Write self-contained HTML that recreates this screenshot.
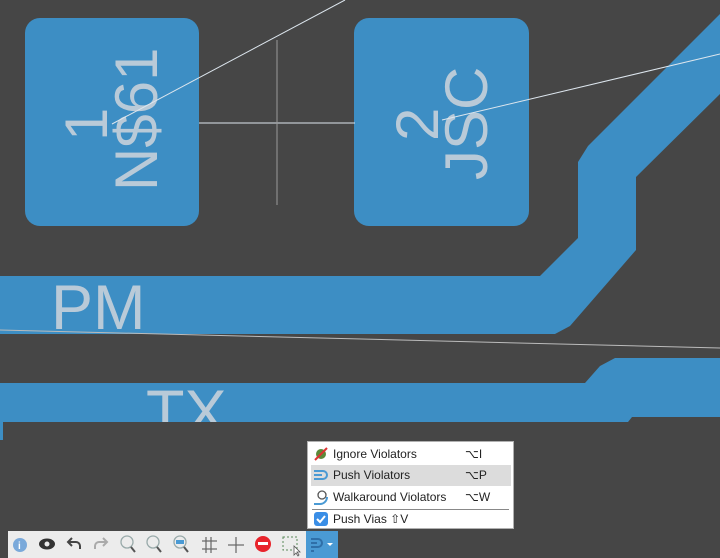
<!DOCTYPE html>
<html><head><meta charset="utf-8"><style>
body{margin:0;width:720px;height:558px;overflow:hidden;background:#464646;font-family:"Liberation Sans",sans-serif;position:relative}
svg{position:absolute;left:0;top:0}
.menu{position:absolute;left:307px;top:441px;width:207px;height:88px;background:#fff;border:1px solid #b0b0b0;box-sizing:border-box;font-size:12px;color:#222}
.it{position:absolute;left:3px;width:200px;height:21px;line-height:21px}
.it .t{position:absolute;left:22px}
.it .k{position:absolute;left:154px}
.it svg{left:2px;top:2px}
.tb{position:absolute;left:8px;top:531px;width:298px;height:27px;background:#ececec}
.bb{position:absolute;left:306px;top:531px;width:32px;height:27px;background:#4a9ad4}
</style></head><body>
<svg width="720" height="558">
<rect x="25" y="18" width="174" height="208" rx="15" fill="#3d8ec4"/>
<rect x="354" y="18" width="175" height="208" rx="15" fill="#3d8ec4"/>
<polygon points="0,276 540,276 578,238 578,162 588,146 720,14 720,94 636,177 636,250 570,326 555,334 0,334" fill="#3d8ec4"/>
<polygon points="0,383 585,383 600,366 615,358 720,358 720,417 632,417 628,422 4,422 4,440 0,440" fill="#3d8ec4"/>
<g fill="#b9cad8" font-family="Liberation Sans" font-size="60">
<text transform="translate(157,191) rotate(-90)">N$61</text>
<text transform="translate(107,141) rotate(-90)">1</text>
<text transform="translate(487,180) rotate(-90)">JSC</text>
<text transform="translate(438,141) rotate(-90)">2</text>
<text x="51" y="329" font-size="63">PM</text>
<text x="146" y="434" font-size="63">TX</text>
</g>
<rect x="0" y="422" width="720" height="20" fill="#464646"/>
<rect x="0" y="422" width="3" height="18" fill="#3d8ec4"/>
<g stroke="#dde6ee" stroke-width="1" fill="none">
<line x1="112" y1="124" x2="345" y2="0"/>
<line x1="199" y1="123" x2="355" y2="123"/>
<line x1="277" y1="40" x2="277" y2="205" stroke="#9a9a9a"/>
<line x1="442" y1="120" x2="720" y2="54"/>
<line x1="0" y1="330" x2="720" y2="348" stroke="#bbb"/>
</g>
</svg>
<div class="menu">
<div class="it" style="top:2px"><svg width="16" height="16"><circle cx="8" cy="8" r="5" fill="#5c8a3a"/><line x1="2" y1="14" x2="14" y2="2" stroke="#d33" stroke-width="2"/></svg><span class="t">Ignore Violators</span><span class="k">⌥I</span></div>
<div class="it" style="top:23px;background:#dcdcdc"><svg width="16" height="16"><path d="M1 4H10a4 4 0 0 1 0 8H1M1 8H9" stroke="#4a9ad4" stroke-width="2" fill="none"/></svg><span class="t">Push Violators</span><span class="k">⌥P</span></div>
<div class="it" style="top:45px"><svg width="16" height="16"><circle cx="9" cy="6" r="4" stroke="#555" stroke-width="1.3" fill="none"/><path d="M1 15H7a7 7 0 0 0 7-7" stroke="#4a9ad4" stroke-width="2" fill="none"/></svg><span class="t">Walkaround Violators</span><span class="k">⌥W</span></div>
<div style="position:absolute;left:4px;right:4px;top:67px;border-top:1px solid #888"></div>
<div class="it" style="top:67px"><svg width="16" height="16"><rect x="1" y="1" width="14" height="14" rx="3" fill="#3a8ee6"/><path d="M4 8l3 3 5-6" stroke="#fff" stroke-width="2" fill="none"/></svg><span class="t">Push Vias ⇧V</span></div>
</div>
<div class="tb"></div><div class="bb"></div>
<svg width="720" height="558" style="pointer-events:none">
<circle cx="20" cy="545" r="7" fill="#7aa9da"/><text x="18" y="549" font-size="10" fill="#fff" font-weight="bold">i</text>
<ellipse cx="47" cy="544" rx="8" ry="5.5" fill="#333"/><circle cx="47" cy="544" r="2.5" fill="#ececec"/>
<path d="M80 549v-3a4 4 0 0 0-4-4h-7M72 538l-4 4 4 4" stroke="#444" stroke-width="2" fill="none"/>
<path d="M95 549v-3a4 4 0 0 1 4-4h7M103 538l4 4-4 4" stroke="#aaa" stroke-width="2" fill="none"/>
<g stroke="#9aa" stroke-width="1.3" fill="none"><circle cx="127" cy="542" r="6"/><line x1="131" y1="547" x2="135" y2="552" stroke="#555" stroke-width="2"/><circle cx="153" cy="542" r="6"/><line x1="157" y1="547" x2="161" y2="552" stroke="#555" stroke-width="2"/><circle cx="180" cy="542" r="6"/><line x1="184" y1="547" x2="188" y2="552" stroke="#555" stroke-width="2"/></g>
<rect x="176" y="540" width="8" height="4" fill="#4a9ad4"/>
<g stroke="#666" stroke-width="1.2"><line x1="206" y1="537" x2="206" y2="553"/><line x1="211" y1="537" x2="211" y2="553"/><line x1="202" y1="541" x2="217" y2="541"/><line x1="202" y1="549" x2="217" y2="549"/><line x1="236" y1="537" x2="236" y2="553"/><line x1="228" y1="545" x2="244" y2="545"/></g>
<circle cx="263" cy="544" r="8" fill="#e8242c"/><rect x="258" y="542" width="10" height="3" fill="#fff"/>
<rect x="283" y="537" width="14" height="13" fill="none" stroke="#5a8a5a" stroke-dasharray="2 2"/>
<path d="M294 546l0 9 2-2 2 3 1-1-2-3 3 0z" fill="#fff" stroke="#555" stroke-width=".8"/>
<path d="M311 539h7a4 4 0 0 1 0 8h-7M311 543h6M311 551h3" stroke="#2f6fa8" stroke-width="2" fill="none"/>
<path d="M327 543h6l-3 3z" fill="#fff"/>
</svg>
</body></html>
